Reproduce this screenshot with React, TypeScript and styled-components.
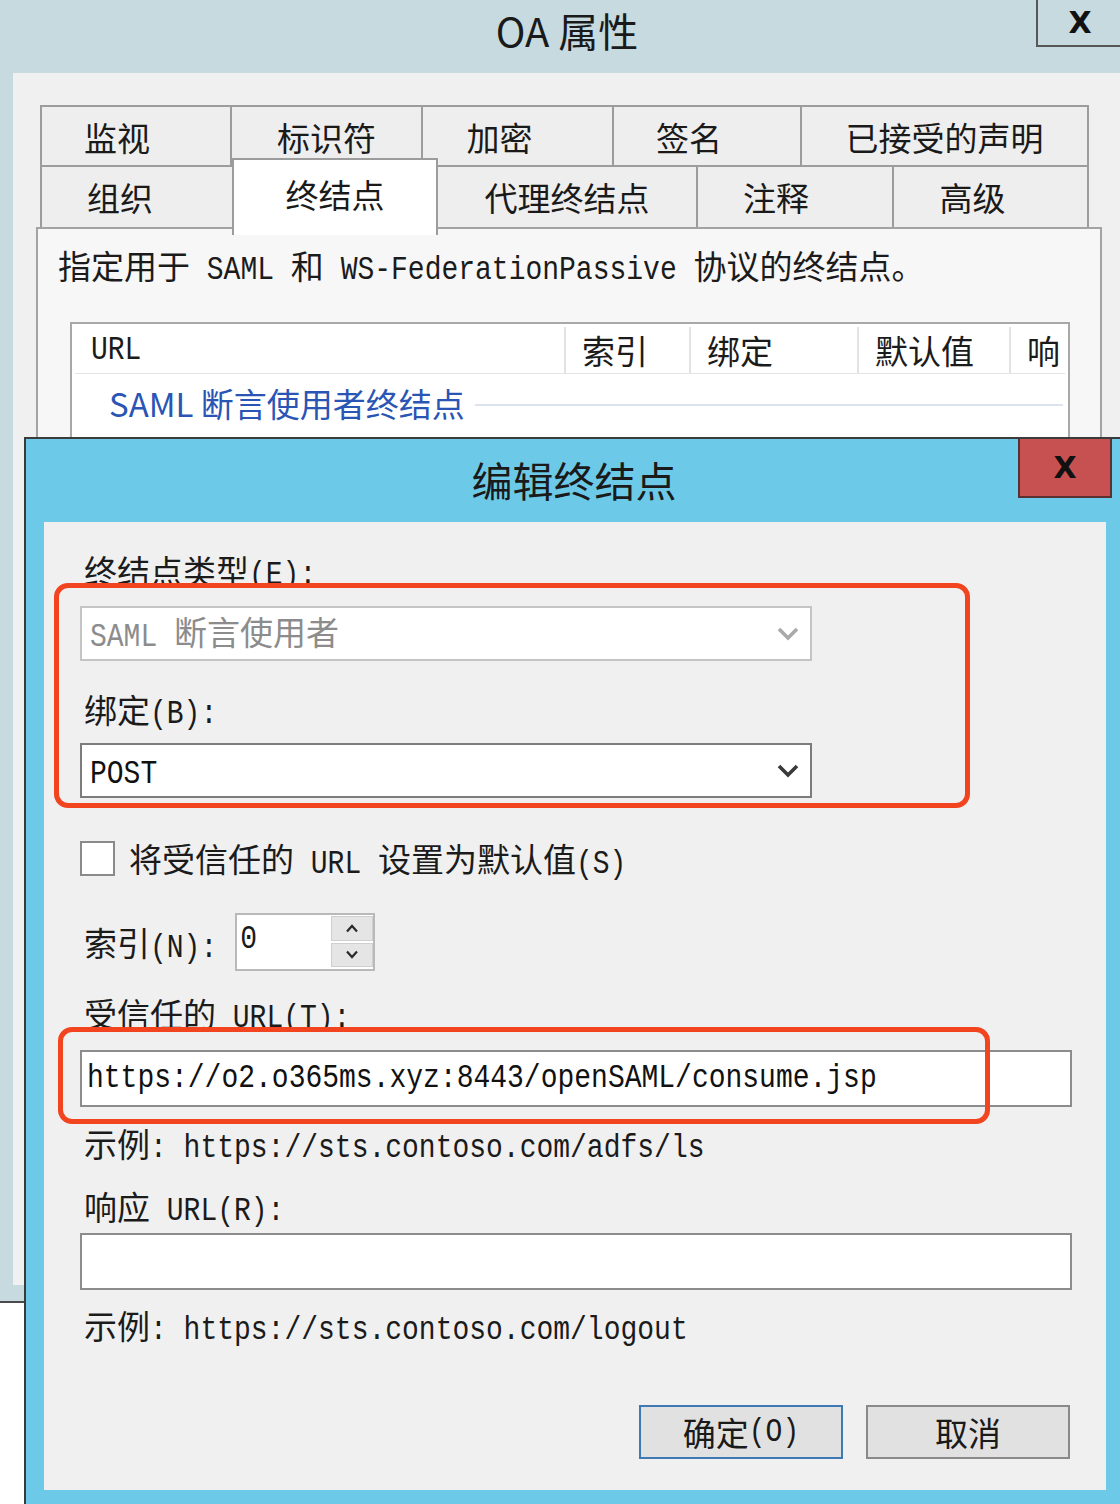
import type { ReactNode } from 'react';
import styled, { createGlobalStyle } from 'styled-components';

const GlobalStyle = createGlobalStyle`
  html, body {
    margin: 0;
    padding: 0;
    background: #ffffff;
  }
  body {
    font-family: "Noto Sans CJK SC", "Noto Sans", sans-serif;
    color: #1b1b1b;
  }
`;

interface TabSpec {
  label: string;
  width: number;
  shift?: number;
  active?: boolean;
}

// two-character tabs sit a little left of centre in the original
const topTabs: TabSpec[] = [
  { label: '监视', width: 192, shift: 38 },
  { label: '标识符', width: 193 },
  { label: '加密', width: 193, shift: 36 },
  { label: '签名', width: 190, shift: 36 },
  { label: '已接受的声明', width: 289 },
];

const bottomTabs: TabSpec[] = [
  { label: '组织', width: 194, shift: 34 },
  { label: '终结点', width: 206, active: true },
  { label: '代理终结点', width: 262 },
  { label: '注释', width: 198, shift: 38 },
  { label: '高级', width: 197, shift: 36 },
];

interface Column {
  label: ReactNode;
  width?: number;
}

const Chevron = ({ color }: { color: string }) => (
  <svg width="22" height="14" viewBox="0 0 22 14">
    <polyline points="2,2 11,11 20,2" fill="none" stroke={color} strokeWidth="3.6" />
  </svg>
);

const SpinArrow = ({ up }: { up?: boolean }) => (
  <svg width="14" height="9" viewBox="0 0 14 9">
    <polyline
      points={up ? '2,7.5 7,2 12,7.5' : '2,1.5 7,7 12,1.5'}
      fill="none"
      stroke="#2a2a2a"
      strokeWidth="2.2"
    />
  </svg>
);

const App = () => {
  const columns: Column[] = [
    { label: <Mono>URL</Mono>, width: 491 },
    { label: '索引', width: 125 },
    { label: '绑定', width: 168 },
    { label: '默认值', width: 152 },
    { label: '响' },
  ];

  return (
    <>
      <GlobalStyle />
      <Desktop>
        <BackWindow>
          <BackTitleBar>
            OA 属性
            <BackClose>X</BackClose>
          </BackTitleBar>
          <BackBody>
            <TabStrip>
              <TabRow>
                {topTabs.map((tab) => (
                  <Tab key={tab.label} $width={tab.width} $shift={tab.shift}>
                    {tab.label}
                  </Tab>
                ))}
              </TabRow>
              <TabRow $second>
                {bottomTabs.map((tab) => (
                  <Tab key={tab.label} $width={tab.width} $shift={tab.shift} $active={tab.active}>
                    {tab.label}
                  </Tab>
                ))}
              </TabRow>
            </TabStrip>
            <TabPanel>
              <Description>
                指定用于<Mono> SAML </Mono>和<Mono> WS-FederationPassive </Mono>协议的终结点。
              </Description>
              <ListBox>
                <ListHeader>
                  {columns.map((col, i) => (
                    <HeaderCell key={i} $width={col.width}>
                      {col.label}
                    </HeaderCell>
                  ))}
                </ListHeader>
                <GroupRow>
                  <GroupTitle>SAML 断言使用者终结点</GroupTitle>
                  <GroupLine />
                </GroupRow>
              </ListBox>
            </TabPanel>
          </BackBody>
        </BackWindow>

        <EditWindow>
          <EditTitleBar>
            编辑终结点
            <EditClose>X</EditClose>
          </EditTitleBar>
          <EditBody>
            <FieldLabel $cut={33}>
              终结点类型<Mono>(E):</Mono>
            </FieldLabel>
            <Combo $disabled $top={23}>
              <ComboText>
                <Mono>SAML </Mono>断言使用者
              </ComboText>
              <Chevron color="#a9a9a9" />
            </Combo>
            <FieldLabel $top={28}>
              绑定<Mono>(B):</Mono>
            </FieldLabel>
            <Combo $top={14}>
              <ComboText>
                <Mono>POST</Mono>
              </ComboText>
              <Chevron color="#3a3a3a" />
            </Combo>

            <CheckRow>
              <CheckBox />
              <span>
                将受信任的<Mono> URL </Mono>设置为默认值<Mono>(S)</Mono>
              </span>
            </CheckRow>

            <IndexRow>
              <span>
                索引<Mono>(N):</Mono>
              </span>
              <SpinBox>
                <SpinValue>
                  <Mono>0</Mono>
                </SpinValue>
                <SpinButtons>
                  <SpinButton>
                    <SpinArrow up />
                  </SpinButton>
                  <SpinButton>
                    <SpinArrow />
                  </SpinButton>
                </SpinButtons>
              </SpinBox>
            </IndexRow>

            <FieldLabel $top={22} $cut={35}>
              受信任的<Mono> URL(T):</Mono>
            </FieldLabel>
            <TextInput $top={22}>
              <Mono>https://o2.o365ms.xyz:8443/openSAML/consume.jsp</Mono>
            </TextInput>
            <FieldLabel $top={16}>
              示例<Mono>: https://sts.contoso.com/adfs/ls</Mono>
            </FieldLabel>

            <FieldLabel $top={23}>
              响应<Mono> URL(R):</Mono>
            </FieldLabel>
            <TextInput $top={7} />
            <FieldLabel $top={15}>
              示例<Mono>: https://sts.contoso.com/logout</Mono>
            </FieldLabel>

            <ButtonRow>
              <DialogButton $primary>
                确定<Mono>(O)</Mono>
              </DialogButton>
              <DialogButton>取消</DialogButton>
            </ButtonRow>

            <Highlight style={{ left: 10, top: 61, width: 916, height: 225 }} />
            <Highlight style={{ left: 14, top: 505, width: 932, height: 97 }} />
          </EditBody>
        </EditWindow>
      </Desktop>
    </>
  );
};

export default App;

const Desktop = styled.div`
  position: relative;
  width: 1120px;
  height: 1504px;
  overflow: hidden;
  background: #ffffff;
`;

// SimSun-style half-width Latin: narrow and tall
const Mono = styled.span`
  display: inline-block;
  font-family: "Liberation Mono", "DejaVu Sans Mono", monospace;
  font-size: 28px;
  white-space: pre;
  transform: scaleY(1.16);
  transform-origin: 50% 60%;
`;

/* ---------- back window (OA 属性) ---------- */

const BackWindow = styled.section`
  position: absolute;
  z-index: 1;
  left: 0;
  top: 0;
  width: 1134px;
  height: 1303px;
  box-sizing: border-box;
  display: flex;
  flex-direction: column;
  background: #c7dae0;
  border-bottom: 2px solid #4a4a4a;
`;

const BackTitleBar = styled.div`
  position: relative;
  height: 73px;
  flex-shrink: 0;
  display: flex;
  align-items: center;
  justify-content: center;
  padding-bottom: 14px;
  box-sizing: border-box;
  font-size: 40px;
  color: #1a1a1a;
`;

const BackClose = styled.div`
  position: absolute;
  right: 0;
  top: -10px;
  width: 98px;
  height: 57px;
  box-sizing: border-box;
  border-left: 2px solid #575757;
  border-bottom: 2px solid #575757;
  display: flex;
  align-items: center;
  justify-content: center;
  padding: 10px 12px 0 0;
  font-family: "DejaVu Sans", sans-serif;
  font-weight: 700;
  font-size: 30px;
  color: #111;
`;

const BackBody = styled.div`
  flex: 1;
  margin: 0 0 16px 13px;
  background: #f0f0f0;
  padding: 32px 0 0 27px;
  display: flex;
  flex-direction: column;
  overflow: hidden;
`;

const TabStrip = styled.div`
  width: 1057px;
  display: flex;
  flex-direction: column;
`;

const TabRow = styled.div<{ $second?: boolean }>`
  display: flex;
  align-items: flex-start;
  height: 62px;
  margin-top: ${(p) => (p.$second ? '-2px' : '0')};
`;

const Tab = styled.div<{ $width: number; $shift?: number; $active?: boolean }>`
  position: relative;
  z-index: ${(p) => (p.$active ? 3 : 1)};
  width: ${(p) => p.$width}px;
  height: ${(p) => (p.$active ? '77px' : '64px')};
  margin-top: ${(p) => (p.$active ? '-7px' : '0')};
  box-sizing: border-box;
  border: 2px solid #9c9c9c;
  border-bottom: ${(p) => (p.$active ? 'none' : '2px solid #9c9c9c')};
  margin-left: -2px;
  background: ${(p) => (p.$active ? '#ffffff' : '#eeeeee')};
  display: flex;
  align-items: ${(p) => (p.$active ? 'flex-start' : 'center')};
  padding-top: ${(p) => (p.$active ? '10px' : '0')};
  padding-right: ${(p) => p.$shift ?? 0}px;
  justify-content: center;
  font-size: 33px;
  color: #1a1a1a;

  &:first-child {
    margin-left: 0;
  }
`;

const TabPanel = styled.div`
  position: relative;
  z-index: 2;
  width: 1066px;
  flex: 1;
  margin: 0 0 0 -4px;
  box-sizing: border-box;
  border: 2px solid #a3a3a3;
  background: #f7f7f7;
  padding: 14px 0 0 20px;
`;

const Description = styled.div`
  height: 44px;
  line-height: 44px;
  font-size: 33px;
  white-space: nowrap;
`;

const ListBox = styled.div`
  margin: 35px 0 0 12px;
  width: 1000px;
  height: 320px;
  box-sizing: border-box;
  border: 2px solid #a8a8a8;
  background: #ffffff;
  padding: 3px;
`;

const ListHeader = styled.div`
  display: flex;
  height: 46px;
  border-bottom: 1px solid #e4e4e4;
`;

const HeaderCell = styled.div<{ $width?: number }>`
  ${(p) => (p.$width ? `width: ${p.$width}px;` : 'flex: 1;')}
  box-sizing: border-box;
  padding-left: 16px;
  border-right: 2px solid #e2e2e2;
  display: flex;
  align-items: center;
  font-size: 33px;
  white-space: nowrap;
  overflow: hidden;

  &:last-child {
    border-right: none;
  }
`;

const GroupRow = styled.div`
  display: flex;
  align-items: center;
  height: 58px;
  padding-left: 34px;
`;

const GroupTitle = styled.span`
  font-size: 33px;
  color: #2a55b4;
  white-space: nowrap;
`;

const GroupLine = styled.div`
  flex: 1;
  height: 2px;
  margin: 4px 2px 0 10px;
  background: #dde3ec;
`;

/* ---------- front window (编辑终结点) ---------- */

const EditWindow = styled.section`
  position: absolute;
  z-index: 2;
  left: 24px;
  top: 437px;
  width: 1100px;
  height: 1090px;
  box-sizing: border-box;
  border: 2px solid #3b3b3b;
  background: #6ccae8;
  display: flex;
  flex-direction: column;
`;

const EditTitleBar = styled.div`
  position: relative;
  height: 83px;
  flex-shrink: 0;
  display: flex;
  align-items: center;
  justify-content: center;
  padding-bottom: 4px;
  box-sizing: border-box;
  font-size: 41px;
  color: #1a1a1a;
`;

const EditClose = styled.div`
  position: absolute;
  right: 10px;
  top: 0;
  width: 94px;
  height: 59px;
  box-sizing: border-box;
  border: 2px solid #5a3030;
  border-top: none;
  background: #c75050;
  display: flex;
  align-items: center;
  justify-content: center;
  font-family: "DejaVu Sans", sans-serif;
  font-weight: 700;
  font-size: 30px;
  color: #111;
`;

const EditBody = styled.div`
  position: relative;
  margin-left: 18px;
  width: 1062px;
  height: 968px;
  box-sizing: border-box;
  background: #f0f0f0;
  padding: 28px 0 0 36px;
  display: flex;
  flex-direction: column;
  align-items: flex-start;
  font-size: 33px;
`;

// $cut: the label is clipped where the red annotation crosses it, as in the capture
const FieldLabel = styled.div<{ $top?: number; $cut?: number }>`
  margin-top: ${(p) => p.$top ?? 0}px;
  height: ${(p) => p.$cut ?? 40}px;
  line-height: 40px;
  overflow: ${(p) => (p.$cut ? 'hidden' : 'visible')};
  padding-left: 4px;
  white-space: nowrap;
  color: #1b1b1b;
`;

const Combo = styled.div<{ $disabled?: boolean; $top: number }>`
  margin-top: ${(p) => p.$top}px;
  width: 732px;
  height: 55px;
  box-sizing: border-box;
  border: 2px solid ${(p) => (p.$disabled ? '#c4c4c4' : '#7c7c7c')};
  background: #ffffff;
  display: flex;
  align-items: center;
  justify-content: space-between;
  padding: 0 11px 0 8px;
  color: ${(p) => (p.$disabled ? '#8c8c8c' : '#111')};
`;

const ComboText = styled.span`
  white-space: nowrap;
  line-height: 1;
`;

const CheckRow = styled.div`
  margin-top: 40px;
  height: 40px;
  display: flex;
  align-items: center;
  gap: 14px;
  white-space: nowrap;
`;

const CheckBox = styled.div`
  width: 35px;
  height: 35px;
  box-sizing: border-box;
  border: 2px solid #8a8a8a;
  background: #ffffff;
`;

const IndexRow = styled.div`
  margin-top: 35px;
  height: 58px;
  display: flex;
  align-items: center;
  gap: 18px;
  padding-left: 4px;
  white-space: nowrap;
`;

const SpinBox = styled.div`
  width: 140px;
  height: 58px;
  box-sizing: border-box;
  border: 2px solid #b9b9b9;
  background: #ffffff;
  display: flex;
`;

const SpinValue = styled.div`
  flex: 1;
  padding: 0 0 0 3px;
  line-height: 36px;
`;

const SpinButtons = styled.div`
  width: 42px;
  display: flex;
  flex-direction: column;
  gap: 2px;
  padding: 1px 0 2px;
`;

const SpinButton = styled.div`
  flex: 1;
  background: #e5e5e5;
  border: 1px solid #cfcfcf;
  display: flex;
  align-items: center;
  justify-content: center;
`;

const TextInput = styled.div<{ $top: number }>`
  margin-top: ${(p) => p.$top}px;
  width: 992px;
  height: 57px;
  box-sizing: border-box;
  border: 2px solid #8c8c8c;
  background: #ffffff;
  display: flex;
  align-items: center;
  padding-left: 5px;
  color: #111;
`;

const ButtonRow = styled.div`
  margin-top: 60px;
  align-self: stretch;
  display: flex;
  justify-content: flex-end;
  gap: 23px;
  padding-right: 36px;
`;

const DialogButton = styled.div<{ $primary?: boolean }>`
  width: 204px;
  height: 54px;
  box-sizing: border-box;
  border: 2px solid ${(p) => (p.$primary ? '#3d7ab3' : '#8a8a8a')};
  background: #e1e1e1;
  display: flex;
  align-items: center;
  justify-content: center;
  white-space: nowrap;
  color: #1a1a1a;
`;

const Highlight = styled.div`
  position: absolute;
  box-sizing: border-box;
  border: 5px solid #f2441e;
  border-radius: 14px;
  pointer-events: none;
`;
